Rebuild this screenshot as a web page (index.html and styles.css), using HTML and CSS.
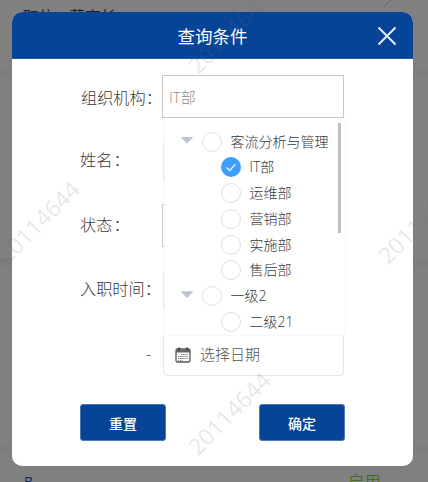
FILE: index.html
```html
<!DOCTYPE html>
<html lang="zh-CN">
<head>
<meta charset="utf-8">
<title>查询条件</title>
<link rel="stylesheet" href="styles.css">
</head>
<body>
<div class="page">
  <div class="band band-top"></div>
  <div class="band band-middle"></div>
  <div class="band band-bottom"></div>
  <span class="behind behind-title">职位：董事长</span>
  <svg class="behind behind-slash" viewBox="0 0 8 8"><path d="M0 7 7 0"/></svg>
  <span class="behind behind-name">B</span>
  <span class="behind behind-state">启用</span>
  <section class="modal">
    <header class="modal-head">
      <h1>查询条件</h1>
      <svg class="close" viewBox="0 0 20 20"><path d="M1.5 1.5 18.5 18.5M18.5 1.5 1.5 18.5"/></svg>
    </header>
    <div class="form">
      <div class="row"><label class="org">组织机构：</label><div class="field square first">IT部</div></div>
      <div class="row"><label>姓名<span class="colon">：</span></label><div class="field faint"></div></div>
      <div class="row"><label>状态<span class="colon">：</span></label><div class="field square"></div></div>
      <div class="row"><label>入职时间：</label><div class="field faint"></div></div>
      <div class="row"><label class="dash">-</label><div class="field date">
        <svg class="calendar" viewBox="0 0 16 16"><rect x="1" y="2" width="14" height="13" rx="1.5" fill="#fff" stroke="#555" stroke-width="1.3"/><path d="M1 2.5h14v3H1z" fill="#666"/><path d="M4 .5v3M12 .5v3" stroke="#333" stroke-width="1.4"/><path d="M6 7.5h7M3 9.5h10M3 11.5h10M3 13.3h5" stroke="#888" stroke-dasharray="1.5 .6"/></svg>
        <span>选择日期</span></div></div>
    </div>
    <footer class="actions"><button>重置</button><button>确定</button></footer>
    <div class="dropdown">
      <ul class="tree">
        <li class="parent"><i class="caret"></i><i class="radio"></i><span>客流分析与管理</span></li>
        <li><i class="radio on"><svg viewBox="0 0 20 20"><path d="M5.5 10.5 8.8 13.4 14.5 7.2"/></svg></i><span>IT部</span></li>
        <li><i class="radio"></i><span>运维部</span></li>
        <li><i class="radio"></i><span>营销部</span></li>
        <li><i class="radio"></i><span>实施部</span></li>
        <li><i class="radio"></i><span>售后部</span></li>
        <li class="parent"><i class="caret"></i><i class="radio"></i><span>一级2</span></li>
        <li><i class="radio"></i><span>二级21</span></li>
      </ul>
      <div class="thumb"></div>
    </div>
  </section>
  <span class="mark mark-a">20114644</span>
  <span class="mark mark-b">20114644</span>
  <span class="mark mark-c">20114644</span>
  <span class="mark mark-d">20114644</span>
</div>
</body>
</html>
```
FILE: styles.css
```css
* { box-sizing: border-box; }
body {
  margin: 0;
  font-family: "Open Sans", "Noto Sans CJK SC", sans-serif;
  font-weight: 300;
  color: #3a3a3a;
}
.page {
  position: relative;
  width: 428px;
  height: 482px;
  padding: 12px 15px 0 12px;
  overflow: hidden;
  background: #808080;
}
.band { position: absolute; left: 0; width: 100%; height: 8px; background: #7c7c7c; }
.band-top { top: 70px; }
.band-middle { top: 258px; }
.band-bottom { top: 446px; }
.behind { position: absolute; font-size: 16px; line-height: 20px; white-space: nowrap; font-weight: 400; }
.behind-title { left: 23px; top: 7px; font-size: 15.5px; color: #222; }
.behind-slash { left: 384px; top: 0; width: 8px; height: 8px; }
.behind-slash path { fill: none; stroke: #666; }
.behind-name { left: 24px; top: 472px; font-size: 14px; color: #13294d; }
.behind-state { left: 348px; top: 472px; font-size: 16.5px; font-weight: 300; color: #336a08; }
.modal {
  position: relative;
  width: 401px;
  height: 454px;
  border-radius: 10px;
  background: #fff;
  overflow: hidden;
}
.modal-head {
  display: flex;
  align-items: center;
  justify-content: center;
  position: relative;
  height: 47px;
  background: #074498;
  border-bottom: 1px solid #2059a5;
}
.modal-head h1 {
  margin: 2px 0 0;
  font-size: 17.5px;
  line-height: 24px;
  font-weight: 400;
  color: #fff;
}
.close { position: absolute; right: 16px; top: 14px; width: 20px; height: 20px; }
.close path { fill: none; stroke: #e4ecf6; stroke-width: 2; }
.form { display: grid; gap: 21.5px; padding: 16px 69px 0 68px; }
.row { display: flex; height: 43px; align-items: center; }
.row label { width: 82px; font-size: 16.2px; line-height: 24px; white-space: nowrap; flex: none; padding-bottom: 2px; }
.row .org { padding: 2px 0 0 1px; }
.row .dash { padding-left: 66px; }
.colon { margin-left: 1px; }
.field {
  display: flex;
  align-items: center;
  flex: none;
  width: 182px;
  height: 43px;
  border: 1px solid #e6e6e9;
  border-radius: 4px;
  font-size: 15px;
}
.square { border-color: #c8c8c8; border-radius: 0; }
.first { padding-left: 6px; color: #8c8c8c; }
.faint { margin-left: 1px; width: 181px; }
.date { margin-left: 1px; width: 181px; padding-left: 11px; gap: 9px; color: #555; }
.date span { margin-top: -2px; }
.calendar { width: 16px; height: 16px; }
.actions { display: flex; justify-content: space-between; padding: 28px 68px 0; }
.actions button {
  width: 86px;
  height: 37px;
  padding: 1px 0 0;
  border: 1px solid #4a77b5;
  border-radius: 3px;
  background: #074498;
  color: #fff;
  font: 500 14px/20px "Noto Sans CJK SC", sans-serif;
}
.dropdown {
  position: absolute;
  left: 152px;
  top: 107px;
  width: 182px;
  height: 217px;
  background: #fff;
  border: 1px solid #f7f7f7;
  border-top: 0;
}
.tree { list-style: none; margin: 0; padding: 9.8px 0 0; font-size: 14px; color: #36383d; }
.tree li { display: flex; align-items: center; height: 25.75px; padding-left: 56px; white-space: nowrap; }
.tree .parent { padding-left: 15.5px; }
.tree span { margin-left: 8.5px; line-height: 20px; }
.caret { width: 13px; height: 7px; margin-right: 8.5px; margin-top: -3px; background: #bec4d0; clip-path: polygon(0 0, 100% 0, 50% 100%); }
.radio { width: 20px; height: 20px; flex: none; border: 1px solid #dddfe7; border-radius: 50%; }
.on { border: 0; background: #409eff; }
.on svg { display: block; }
.on path { fill: none; stroke: #fff; stroke-width: 1.2; }
.thumb { position: absolute; right: 4px; top: 4px; width: 3px; height: 110px; background: #c1c1c1; }
.mark {
  position: absolute;
  width: 120px;
  line-height: 30px;
  text-align: center;
  font-family: "Noto Sans", sans-serif;
  font-size: 23px;
  font-weight: 400;
  color: rgba(110, 110, 110, .16);
  transform: rotate(-45deg);
  pointer-events: none;
}
.mark-a { left: 169px; top: 17px; }
.mark-b { left: -22px; top: 207px; }
.mark-c { left: 359px; top: 207px; }
.mark-d { left: 169px; top: 398px; }
```
